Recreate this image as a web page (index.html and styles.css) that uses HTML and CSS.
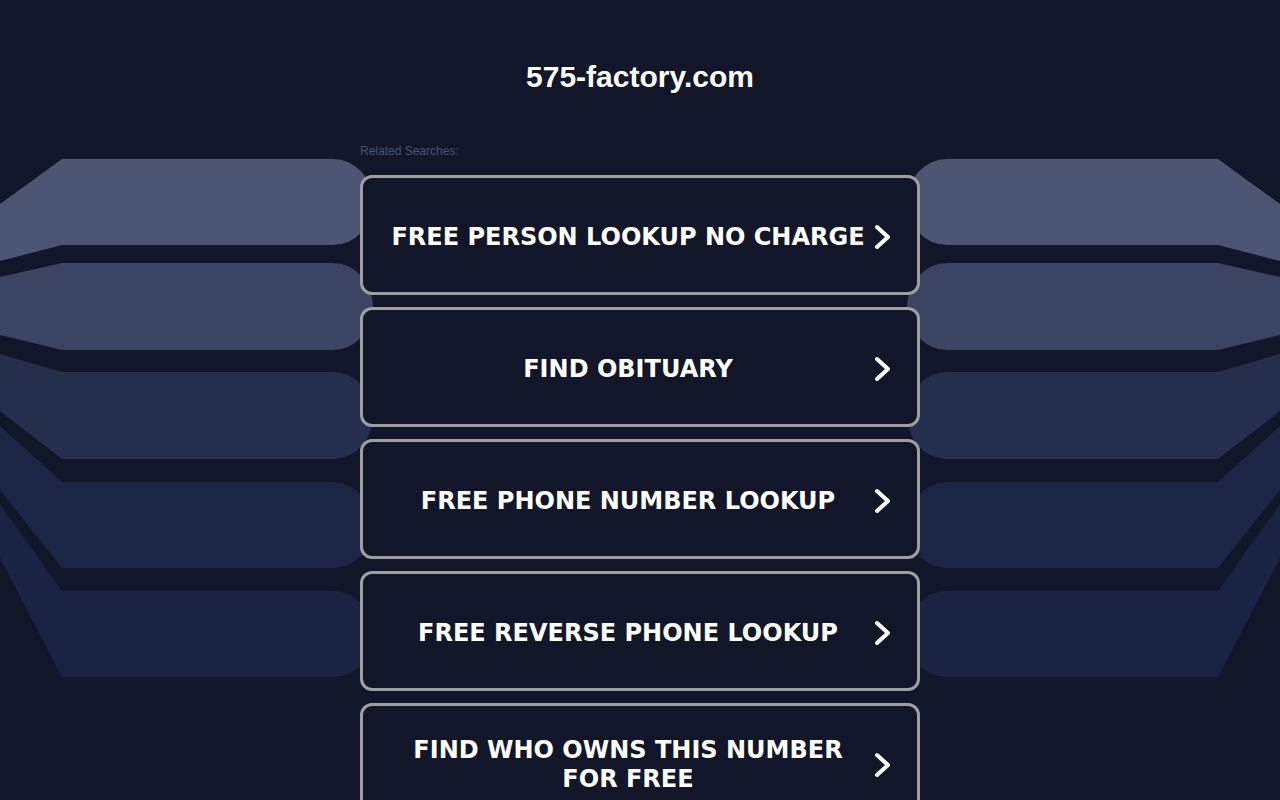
FILE: index.html
```html
<!DOCTYPE html>
<html lang="en">
<head>
<meta charset="utf-8">
<title>575-factory.com</title>
<link rel="stylesheet" href="styles.css">
</head>
<body>
<svg class="backdrop" width="1280" height="800" viewBox="0 0 1280 800" aria-hidden="true">
  <g class="bands">
    <path class="b1" d="M0,204 L62,159 L333,159 A40,43 0 0 1 333,245 L62,245 L0,261 Z"/>
    <path class="b2" d="M0,277 L62,263 L333,263 A40,43.5 0 0 1 333,350 L62,350 L0,335 Z"/>
    <path class="b3" d="M0,354 L62,372 L333,372 A40,43.5 0 0 1 333,459 L62,459 L0,411 Z"/>
    <path class="b4" d="M0,426 L62,482 L333,482 A40,43 0 0 1 333,568 L62,568 L0,490 Z"/>
    <path class="b5" d="M0,504 L62,591 L333,591 A40,43 0 0 1 333,677 L62,677 L0,558 Z"/>
  </g>
  <g class="bands" transform="translate(1280,0) scale(-1,1)">
    <path class="b1" d="M0,204 L62,159 L333,159 A40,43 0 0 1 333,245 L62,245 L0,261 Z"/>
    <path class="b2" d="M0,277 L62,263 L333,263 A40,43.5 0 0 1 333,350 L62,350 L0,335 Z"/>
    <path class="b3" d="M0,354 L62,372 L333,372 A40,43.5 0 0 1 333,459 L62,459 L0,411 Z"/>
    <path class="b4" d="M0,426 L62,482 L333,482 A40,43 0 0 1 333,568 L62,568 L0,490 Z"/>
    <path class="b5" d="M0,504 L62,591 L333,591 A40,43 0 0 1 333,677 L62,677 L0,558 Z"/>
  </g>
</svg>
<main class="page">
  <h1 class="domain">575-factory.com</h1>
  <p class="related">Related Searches:</p>
  <ul class="links">
    <li><a class="link" href="#"><span class="label">FREE PERSON LOOKUP NO CHARGE</span><svg class="chev" width="24" height="28" viewBox="0 0 24 28"><polyline points="4,4 15,14 4,24"/></svg></a></li>
    <li><a class="link" href="#"><span class="label">FIND OBITUARY</span><svg class="chev" width="24" height="28" viewBox="0 0 24 28"><polyline points="4,4 15,14 4,24"/></svg></a></li>
    <li><a class="link" href="#"><span class="label">FREE PHONE NUMBER LOOKUP</span><svg class="chev" width="24" height="28" viewBox="0 0 24 28"><polyline points="4,4 15,14 4,24"/></svg></a></li>
    <li><a class="link" href="#"><span class="label">FREE REVERSE PHONE LOOKUP</span><svg class="chev" width="24" height="28" viewBox="0 0 24 28"><polyline points="4,4 15,14 4,24"/></svg></a></li>
    <li><a class="link" href="#"><span class="label">FIND WHO OWNS THIS NUMBER FOR FREE</span><svg class="chev" width="24" height="28" viewBox="0 0 24 28"><polyline points="4,4 15,14 4,24"/></svg></a></li>
  </ul>
</main>
</body>
</html>
```
FILE: styles.css
```css
html, body {
  margin: 0;
  padding: 0;
  background: #111729;
  overflow: hidden;
}
body {
  position: relative;
  min-height: 800px;
  font-family: "Liberation Sans", Arial, sans-serif;
}
.backdrop {
  position: absolute;
  left: 0;
  top: 0;
  z-index: 0;
}
.b1 { fill: #4c5573; }
.b2 { fill: #3b4462; }
.b3 { fill: #262e4d; }
.b4 { fill: #1d2546; }
.b5 { fill: #1b2345; }

.page {
  position: relative;
  z-index: 1;
  width: 560px;
  margin: 0 auto;
  padding-top: 61px;
}
.domain {
  margin: 0;
  height: 32px;
  line-height: 32px;
  font-size: 30px;
  font-weight: bold;
  color: #ffffff;
  text-align: center;
}
.related {
  margin: 51px 0 0;
  font-size: 12px;
  line-height: 14px;
  color: #4b5573;
}
.links {
  list-style: none;
  margin: 17px 0 0;
  padding: 0;
  display: flex;
  flex-direction: column;
  gap: 12px;
}
.link {
  box-sizing: border-box;
  height: 120px;
  display: flex;
  align-items: center;
  padding: 4px 20px 0;
  border: 3px solid #9e9e9e;
  border-radius: 12px;
  background: #111729;
  text-decoration: none;
  color: #ffffff;
}
.label {
  flex: 1;
  text-align: center;
  font-family: "DejaVu Sans", Verdana, sans-serif;
  font-weight: bold;
  font-size: 24px;
  line-height: 29px;
  padding: 0 8px;
}
.chev {
  flex: none;
}
.chev polyline {
  fill: none;
  stroke: #ffffff;
  stroke-width: 4;
  stroke-linecap: round;
  stroke-linejoin: round;
}
```
